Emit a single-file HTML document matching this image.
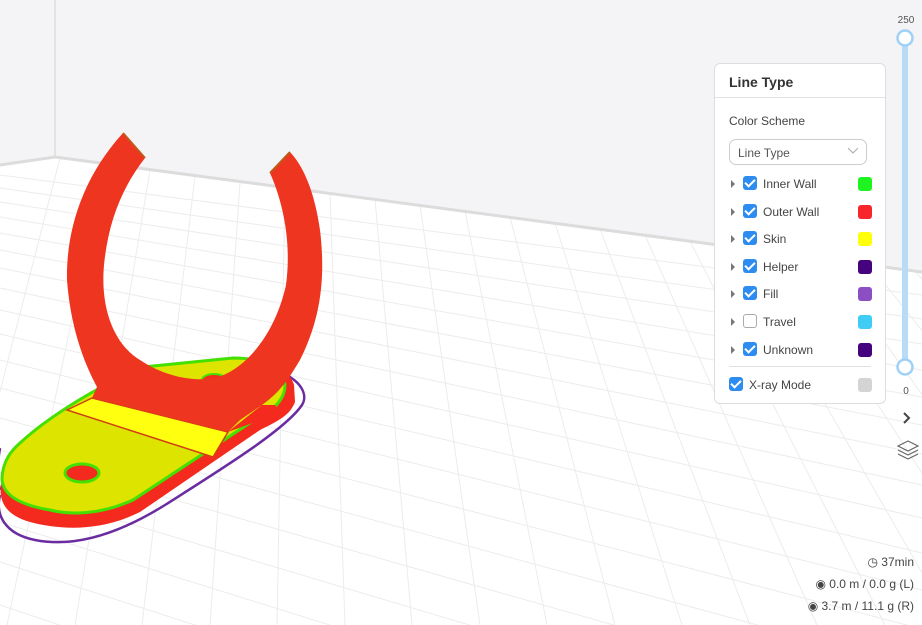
<!DOCTYPE html>
<html style="overflow:hidden"><head><meta charset="utf-8"><style>
*{margin:0;padding:0;box-sizing:border-box}
html,body{width:922px;height:625px;overflow:hidden}
body{position:relative;background:#fff;font-family:"Liberation Sans",sans-serif;color:#333}
svg.bg{position:absolute;left:0;top:0;display:block}
.panel{position:absolute;left:714px;top:63px;width:172px;height:341px;background:#fff;border:1px solid #ddd;border-radius:6px}
.hd{position:absolute;left:14px;top:10px;font-size:14px;font-weight:bold;color:#333}
.hl{position:absolute;left:0;right:0;top:33px;border-top:1px solid #e2e2e2}
.cs{position:absolute;left:14px;top:50px;font-size:12px;color:#444}
.dd{position:absolute;left:14px;top:75px;width:138px;height:26px;border:1px solid #ccc;border-radius:7px;font-size:12px;color:#555;padding:6px 0 0 8px}
.dd svg{position:absolute;right:8px;top:8px}
.row{position:absolute;left:0;width:172px;height:18px;font-size:12px;color:#444}
.tri{position:absolute;left:16px;top:4px;width:0;height:0;border-left:4px solid #777;border-top:4px solid transparent;border-bottom:4px solid transparent}
.cb{position:absolute;left:28px;top:0;width:14px;height:14px;border-radius:3px;background:#2e8cf0}
.cb.off{background:#fff;border:1px solid #aaa}
.cb:not(.off)::after{content:"";position:absolute;left:4px;top:1px;width:4px;height:8px;border:solid #fff;border-width:0 2px 2px 0;transform:rotate(45deg)}
.lb{position:absolute;left:48px;top:1px}
.sw{position:absolute;left:143px;top:1px;width:14px;height:14px;border-radius:3px}
.stat{position:absolute;right:8px;font-size:12px;color:#444;text-align:right;line-height:14px}
</style></head><body>
<svg class="bg" width="922" height="625">
<rect x="0" y="0" width="922" height="625" fill="#fff"/>
<g stroke="#ececec" stroke-width="1" fill="none">
<line x1="0" y1="175" x2="922" y2="295"/><line x1="0" y1="188" x2="922" y2="319"/><line x1="0" y1="202" x2="922" y2="344"/><line x1="0" y1="217" x2="922" y2="370"/><line x1="0" y1="233" x2="922" y2="397"/><line x1="0" y1="250" x2="922" y2="425"/><line x1="0" y1="268" x2="922" y2="454"/><line x1="0" y1="288" x2="922" y2="485"/><line x1="0" y1="310" x2="922" y2="518"/><line x1="0" y1="334" x2="922" y2="553"/><line x1="0" y1="360" x2="922" y2="590"/><line x1="0" y1="388" x2="922" y2="629"/><line x1="0" y1="418" x2="922" y2="670"/><line x1="0" y1="450" x2="922" y2="713"/><line x1="0" y1="485" x2="922" y2="760"/><line x1="0" y1="522" x2="922" y2="810"/><line x1="0" y1="562" x2="922" y2="860"/><line x1="0" y1="605" x2="922" y2="915"/>
<line x1="60" y1="158" x2="-60" y2="625"/><line x1="105" y1="164" x2="7" y2="625"/><line x1="150" y1="170" x2="75" y2="625"/><line x1="195" y1="176" x2="142" y2="625"/><line x1="240" y1="182" x2="210" y2="625"/><line x1="285" y1="187" x2="277" y2="625"/><line x1="330" y1="193" x2="345" y2="625"/><line x1="375" y1="199" x2="412" y2="625"/><line x1="420" y1="205" x2="480" y2="625"/><line x1="465" y1="211" x2="547" y2="625"/><line x1="510" y1="217" x2="615" y2="625"/><line x1="555" y1="223" x2="682" y2="625"/><line x1="600" y1="229" x2="750" y2="625"/><line x1="645" y1="235" x2="817" y2="625"/><line x1="690" y1="241" x2="885" y2="625"/><line x1="735" y1="247" x2="952" y2="625"/><line x1="780" y1="253" x2="1020" y2="625"/><line x1="825" y1="259" x2="1087" y2="625"/><line x1="870" y1="265" x2="1155" y2="625"/><line x1="915" y1="271" x2="1222" y2="625"/>
</g>
<polygon points="0,0 922,0 922,272 55,157 0,165" fill="#f4f4f6"/>
<line x1="55" y1="0" x2="55" y2="157" stroke="#ddd" stroke-width="1.5"/>
<polyline points="0,165 55,157 922,272" fill="none" stroke="#dcdcdc" stroke-width="3"/>
<path d="M278,372 C295,376 310,392 302,405 C285,430 220,470 165,505 C120,533 75,548 35,540 C5,534 -5,515 0,495" fill="none" stroke="#6a2ca0" stroke-width="2.5"/>
<path d="M0,448 C-2,460 -4,475 0,490" fill="none" stroke="#6a2ca0" stroke-width="2.5"/>
<path d="M143,367 L233,358 C270,358 290,370 294,385 L295,402 C290,415 280,420 260,430 L140,512 C100,532 60,530 30,522 C5,515 -3,500 2,480 L20,443 C50,415 90,390 143,367 Z" fill="#f42a1e"/>
<path d="M143,367 L233,358 C268,358 292,372 283,395 C280,402 275,408 265,413 L133,500 C100,515 70,515 50,510 C20,505 2,495 2,478 C3,460 12,450 20,443 C45,420 90,390 143,367 Z" fill="#dde400" stroke="#44e000" stroke-width="3"/>
<path d="M67,410 L92,398 L228,432 L213,457 Z" fill="#ffff10" stroke="#d04010" stroke-width="1.5"/>
<ellipse cx="82" cy="473" rx="17" ry="9" fill="#f42a1e" stroke="#44e000" stroke-width="3"/>
<ellipse cx="214" cy="380" rx="12" ry="6" fill="#f42a1e" stroke="#44e000" stroke-width="2"/>
<path d="M123,133 L145,158 C120,190 108,225 104,265 C100,310 115,345 140,360 C165,377 195,382 215,378 C245,370 275,335 286,285 C292,240 282,200 270,173 L290,152 C305,168 315,195 320,230 C326,280 320,320 300,360 C288,380 280,392 262,405 L240,420 L228,432 L92,398 L97,387 C80,355 70,320 67,280 C66,235 80,180 123,133 Z" fill="#ee3520"/>
<path d="M123,133 L145,158 M270,173 L290,152" stroke="#c05a1a" stroke-width="2"/>
<path d="M228,432 L262,405 L275,405 L280,413 Z" fill="#f42a1e"/>
<rect x="902" y="38" width="6" height="330" fill="#b8dcf8"/>
<circle cx="905" cy="38" r="7.5" fill="#fff" stroke="#9fd0f5" stroke-width="2.5"/>
<circle cx="905" cy="367" r="7.5" fill="#fff" stroke="#9fd0f5" stroke-width="2.5"/>
<text x="906" y="23" font-size="10" fill="#555" text-anchor="middle" font-family="Liberation Sans">250</text>
<text x="906" y="394" font-size="10" fill="#555" text-anchor="middle" font-family="Liberation Sans">0</text>
<polyline points="904,413 909,418 904,423" fill="none" stroke="#444" stroke-width="2"/>
<g fill="none" stroke="#666" stroke-width="1.2"><path d="M898,446 L908,441 L918,446 L908,451 Z"/><path d="M898,450 L908,455 L918,450"/><path d="M898,454 L908,459 L918,454"/></g>
</svg>
<div class="panel">
<div class="hd">Line Type</div><div class="hl"></div>
<div class="cs">Color Scheme</div>
<div class="dd">Line Type<svg width="10" height="6"><polyline points="0,0 5,5 10,0" fill="none" stroke="#aaa"/></svg></div>
<div class="row" style="top:112px"><div class="tri"></div><div class="cb"></div><div class="lb">Inner Wall</div><div class="sw" style="background:#1ef520"></div></div>
<div class="row" style="top:140px"><div class="tri"></div><div class="cb"></div><div class="lb">Outer Wall</div><div class="sw" style="background:#f8252a"></div></div>
<div class="row" style="top:167px"><div class="tri"></div><div class="cb"></div><div class="lb">Skin</div><div class="sw" style="background:#ffff0a"></div></div>
<div class="row" style="top:195px"><div class="tri"></div><div class="cb"></div><div class="lb">Helper</div><div class="sw" style="background:#45037e"></div></div>
<div class="row" style="top:222px"><div class="tri"></div><div class="cb"></div><div class="lb">Fill</div><div class="sw" style="background:#8b4fc3"></div></div>
<div class="row" style="top:250px"><div class="tri"></div><div class="cb off"></div><div class="lb">Travel</div><div class="sw" style="background:#3fcdf5"></div></div>
<div class="row" style="top:278px"><div class="tri"></div><div class="cb"></div><div class="lb">Unknown</div><div class="sw" style="background:#45037e"></div></div>
<div style="position:absolute;left:14px;right:14px;top:302px;border-top:1px solid #e2e2e2"></div>
<div class="row" style="top:313px"><div class="cb" style="left:14px"></div><div class="lb" style="left:34px">X-ray Mode</div><div class="sw" style="background:#d4d4d4"></div></div>
</div>
<div class="stat" style="top:555px">◷ 37min</div>
<div class="stat" style="top:577px">◉ 0.0 m / 0.0 g (L)</div>
<div class="stat" style="top:599px">◉ 3.7 m / 11.1 g (R)</div>
</body></html>
